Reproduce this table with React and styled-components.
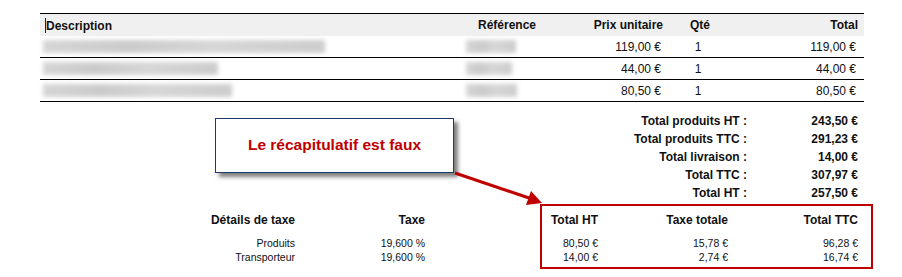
import React from "react";
import styled, { createGlobalStyle } from "styled-components";

const Global = createGlobalStyle`
  html, body { margin: 0; padding: 0; background: #fff; }
  body { font-family: "Liberation Sans", Arial, sans-serif; color: #111; }
`;

const Page = styled.div`
  position: relative;
  width: 902px;
  height: 277px;
  padding-top: 13px;
  box-sizing: border-box;
  overflow: hidden;
`;

const Table = styled.div`
  margin-left: 40px;
  width: 824px;
  border-top: 1px solid #000;
`;

const cols = "433px 105px 80px 74px 121px";

const HeadRow = styled.div`
  display: grid;
  grid-template-columns: ${cols};
  padding: 0 6px 0 5px;
  height: 22px;
  align-items: center;
  background: #f0f0f0;
  font-size: 12px;
  font-weight: bold;
`;

const Row = styled.div`
  display: grid;
  grid-template-columns: ${cols};
  padding: 0 6px 0 3px;
  height: 21px;
  align-items: center;
  border-bottom: 1px solid #000;
  font-size: 12px;
`;

const Cell = styled.div`
  text-align: ${(p) => p.$align || "left"};
  margin-left: ${(p) => p.$ml || 0}px;
  white-space: nowrap;
`;

const Caret = styled.span`
  display: inline-block;
  width: 1px;
  height: 15px;
  background: #222;
  vertical-align: -3px;
`;

const Blur = styled.div`
  width: ${(p) => p.$w}px;
  height: 13px;
  background: linear-gradient(90deg, #cfcfcf, #c2c2c2 30%, #d0d0d0 60%, #c4c4c4);
  filter: blur(2px);
  opacity: 0.85;
`;

const Summary = styled.div`
  margin: 10px 0 0 40px;
  width: 824px;
  padding-right: 6px;
  box-sizing: border-box;
  display: grid;
  grid-template-columns: 1fr 111px;
  grid-auto-rows: 18px;
  align-items: center;
  font-size: 12px;
  font-weight: bold;
  text-align: right;
`;

const TaxSection = styled.div`
  display: flex;
  align-items: flex-start;
  margin-top: 2px;
  padding-left: 180px;
`;

const TaxLeft = styled.div`
  display: grid;
  grid-template-columns: 115px 130px;
  padding-top: 8px;
  text-align: right;
`;

const TaxBox = styled.div`
  margin-left: 115px;
  width: 333px;
  box-sizing: border-box;
  border: 2px solid #c00000;
  padding: 6px 13px 3px 8px;
  display: grid;
  grid-template-columns: 48px 130px 130px;
  text-align: right;
`;

const TH = styled.div`
  font-size: 12px;
  font-weight: bold;
  line-height: 16px;
  margin-bottom: 8px;
  white-space: nowrap;
`;

const TD = styled.div`
  font-size: 10.5px;
  line-height: 14px;
  white-space: nowrap;
`;

const Callout = styled.div`
  position: absolute;
  left: 215px;
  top: 118px;
  width: 239px;
  height: 55px;
  box-sizing: border-box;
  border: 1px solid #1a3a6e;
  background: #fff;
  box-shadow: 4px 4px 4px rgba(0, 0, 0, 0.5);
  display: flex;
  align-items: center;
  justify-content: center;
  padding-bottom: 2px;
  color: #c00000;
  font-size: 15.5px;
  font-weight: bold;
`;

const Arrow = styled.svg`
  position: absolute;
  left: 0;
  top: 0;
  pointer-events: none;
`;

const items = [
  { d: 282, r: 50, p: "119,00 €", q: "1", t: "119,00 €" },
  { d: 175, r: 46, p: "44,00 €", q: "1", t: "44,00 €" },
  { d: 189, r: 51, p: "80,50 €", q: "1", t: "80,50 €" },
];

const totals = [
  ["Total produits HT :", "243,50 €"],
  ["Total produits TTC :", "291,23 €"],
  ["Total livraison :", "14,00 €"],
  ["Total TTC :", "307,97 €"],
  ["Total HT :", "257,50 €"],
];

export default function App() {
  return (
    <Page>
      <Global />
      <Table>
        <HeadRow>
          <Cell><Caret />Description</Cell>
          <Cell>Référence</Cell>
          <Cell $align="right">Prix unitaire</Cell>
          <Cell $align="center">Qté</Cell>
          <Cell $align="right">Total</Cell>
        </HeadRow>
        {items.map((it, i) => (
          <Row key={i}>
            <Cell><Blur $w={it.d} /></Cell>
            <Cell $ml={-10}><Blur $w={it.r} /></Cell>
            <Cell $align="right">{it.p}</Cell>
            <Cell $align="center">{it.q}</Cell>
            <Cell $align="right">{it.t}</Cell>
          </Row>
        ))}
      </Table>
      <Summary>
        {totals.map(([l, v]) => (
          <React.Fragment key={l}>
            <div>{l}</div>
            <div>{v}</div>
          </React.Fragment>
        ))}
      </Summary>
      <TaxSection>
        <TaxLeft>
          <TH>Détails de taxe</TH>
          <TH>Taxe</TH>
          <TD>Produits</TD>
          <TD>19,600 %</TD>
          <TD>Transporteur</TD>
          <TD>19,600 %</TD>
        </TaxLeft>
        <TaxBox>
          <TH>Total HT</TH>
          <TH>Taxe totale</TH>
          <TH>Total TTC</TH>
          <TD>80,50 €</TD>
          <TD>15,78 €</TD>
          <TD>96,28 €</TD>
          <TD>14,00 €</TD>
          <TD>2,74 €</TD>
          <TD>16,74 €</TD>
        </TaxBox>
      </TaxSection>
      <Callout>Le récapitulatif est faux</Callout>
      <Arrow width="902" height="277" viewBox="0 0 902 277">
        <line x1="455" y1="173" x2="532" y2="199" stroke="#c00000" strokeWidth="3" />
        <polygon points="542,203 526,205 531,191" fill="#c00000" />
      </Arrow>
    </Page>
  );
}
